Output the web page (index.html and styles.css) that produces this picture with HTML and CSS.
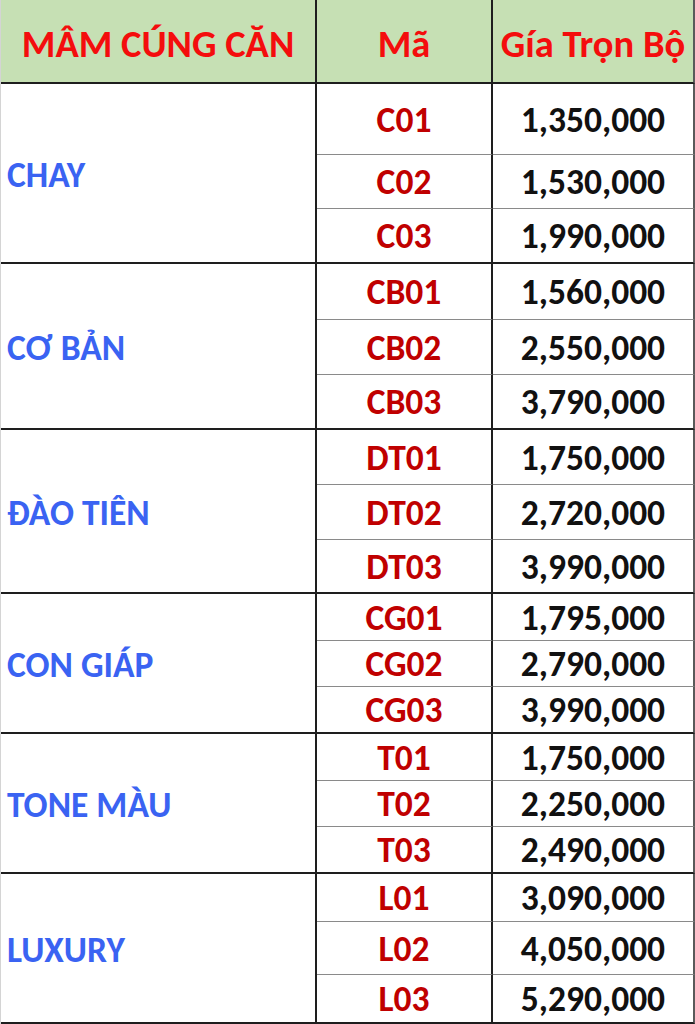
FILE: index.html
```html
<!DOCTYPE html>
<html lang="vi">
<head>
<meta charset="utf-8">
<title>Bảng giá mâm cúng</title>
<link rel="stylesheet" href="styles.css">
</head>
<body>
<div class="sheet">
  <div class="cell head">MÂM CÚNG CĂN</div>
  <div class="cell head">Mã</div>
  <div class="cell head last">Gía Trọn Bộ</div>

  <div class="cell group">CHAY</div>
  <div class="cell code">C01</div><div class="cell price">1,350,000</div>
  <div class="cell code">C02</div><div class="cell price">1,530,000</div>
  <div class="cell code end">C03</div><div class="cell price end">1,990,000</div>

  <div class="cell group">CƠ BẢN</div>
  <div class="cell code">CB01</div><div class="cell price">1,560,000</div>
  <div class="cell code">CB02</div><div class="cell price">2,550,000</div>
  <div class="cell code end">CB03</div><div class="cell price end">3,790,000</div>

  <div class="cell group">ĐÀO TIÊN</div>
  <div class="cell code">DT01</div><div class="cell price">1,750,000</div>
  <div class="cell code">DT02</div><div class="cell price">2,720,000</div>
  <div class="cell code end">DT03</div><div class="cell price end">3,990,000</div>

  <div class="cell group">CON GIÁP</div>
  <div class="cell code">CG01</div><div class="cell price">1,795,000</div>
  <div class="cell code">CG02</div><div class="cell price">2,790,000</div>
  <div class="cell code end">CG03</div><div class="cell price end">3,990,000</div>

  <div class="cell group">TONE MÀU</div>
  <div class="cell code">T01</div><div class="cell price">1,750,000</div>
  <div class="cell code">T02</div><div class="cell price">2,250,000</div>
  <div class="cell code end">T03</div><div class="cell price end">2,490,000</div>

  <div class="cell group">LUXURY</div>
  <div class="cell code">L01</div><div class="cell price">3,090,000</div>
  <div class="cell code">L02</div><div class="cell price">4,050,000</div>
  <div class="cell code end">L03</div><div class="cell price end">5,290,000</div>
</div>
</body>
</html>
```
FILE: styles.css
```css
html, body {
  margin: 0;
  padding: 0;
  background: #ffffff;
}

.sheet {
  display: grid;
  width: 695px;
  grid-template-columns: 316px 176px 202px;
  grid-template-rows: 84px 71px 54px 55px 56px 55px 55px 55px 55px 54px 47px 46px 47px 47px 46px 47px 48px 53px 49px;
  font-family: Carlito, "Open Sans", sans-serif;
  font-weight: bold;
  border-left: 1px solid #d4d4d4;
  box-sizing: border-box;
}

.cell {
  box-sizing: border-box;
  display: flex;
  align-items: center;
  justify-content: center;
  border-right: 2px solid #1e1e1e;
  border-bottom: 1px solid #8a8a8a;
  white-space: nowrap;
}

.head {
  background: #c6e0b4;
  color: #f40d0d;
  font-size: 38.5px;
  border-bottom: 2px solid #1e1e1e;
  padding-top: 4px;
}

.head.last,
.price {
  border-right: 2px solid #5a5a5a;
}

.group {
  grid-row: span 3;
  justify-content: flex-start;
  padding-left: 6px;
  padding-top: 3px;
  color: #3a63f2;
  font-size: 35.5px;
  border-bottom: 2px solid #1e1e1e;
}

.code {
  color: #c00000;
  font-size: 35.5px;
  padding-top: 1px;
}

.price {
  color: #111111;
  font-size: 35.5px;
  padding-top: 1px;
}

.end {
  border-bottom: 2px solid #1e1e1e;
}
```
